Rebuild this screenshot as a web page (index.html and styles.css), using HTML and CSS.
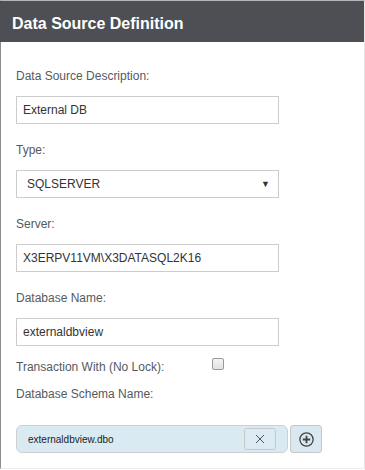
FILE: index.html
```html
<!DOCTYPE html>
<html>
<head>
<meta charset="utf-8">
<link rel="stylesheet" href="styles.css">
</head>
<body>
<div class="panel">
  <div class="header">Data Source Definition</div>
  <div class="content">
    <div class="field">
      <div class="label">Data Source Description:</div>
      <div class="input">External DB</div>
    </div>
    <div class="field">
      <div class="label">Type:</div>
      <div class="select"><span class="select-text">SQLSERVER</span><span class="arrow">&#9660;</span></div>
    </div>
    <div class="field">
      <div class="label">Server:</div>
      <div class="input">X3ERPV11VM\X3DATASQL2K16</div>
    </div>
    <div class="field">
      <div class="label">Database Name:</div>
      <div class="input">externaldbview</div>
    </div>
    <div class="check-row">
      <div class="label check-label">Transaction With (No Lock):</div>
      <span class="checkbox"></span>
    </div>
    <div class="label schema-label">Database Schema Name:</div>
    <div class="tag-row">
      <div class="tag">
        <span class="tag-text">externaldbview.dbo</span>
        <span class="tag-remove">
          <svg width="10" height="10" viewBox="0 0 10 10"><path d="M1 1L9 9M9 1L1 9" stroke="#555" stroke-width="1" fill="none"/></svg>
        </span>
      </div>
      <div class="add-btn">
        <svg width="15" height="15" viewBox="0 0 15 15"><circle cx="7.5" cy="7.5" r="6.6" stroke="#444" stroke-width="1.3" fill="none"/><path d="M7.5 3.8V11.2M3.8 7.5H11.2" stroke="#444" stroke-width="1.8"/></svg>
      </div>
    </div>
  </div>
</div>
</body>
</html>
```
FILE: styles.css
```css
html, body {
  margin: 0;
  padding: 0;
  background: #ffffff;
}
body {
  font-family: "Liberation Sans", Arial, sans-serif;
}
.panel {
  width: 365px;
  height: 469px;
  box-sizing: border-box;
  border-top: 1px solid #b5b5b5;
  border-left: 1px solid #8e8e8e;
  border-right: 1px solid #e6e6e6;
  border-bottom: 1px solid #ececec;
  background: #fff;
}
.header {
  height: 41px;
  background: #4d4f54;
  color: #ffffff;
  font-weight: bold;
  font-size: 16px;
  line-height: 46px;
  padding-left: 12px;
  margin-left: -1px;
  overflow: hidden;
}
.content {
  padding: 26px 0 0 15px;
}
.field {
  margin-bottom: 18px;
}
.label {
  font-size: 12px;
  line-height: 17px;
  color: #555a60;
  margin-bottom: 11px;
}
.input {
  box-sizing: border-box;
  width: 263px;
  height: 28px;
  border: 1px solid #cccccc;
  padding-left: 6px;
  font-size: 12px;
  line-height: 26px;
  color: #333333;
}
.select {
  box-sizing: border-box;
  width: 263px;
  height: 28px;
  border: 1px solid #cccccc;
  padding: 0 8px 0 10px;
  font-size: 12px;
  line-height: 26px;
  color: #333333;
  display: flex;
  justify-content: space-between;
  align-items: center;
}
.arrow {
  font-size: 9px;
  color: #333;
  line-height: 10px;
}
.check-row {
  display: flex;
  align-items: flex-start;
  margin-top: -6px;
}
.check-label {
  width: 196px;
  margin-bottom: 11px;
  padding-top: 1px;
}
.checkbox {
  box-sizing: border-box;
  width: 12px;
  height: 12px;
  border: 1px solid #9a9a9a;
  border-radius: 2px;
  background: linear-gradient(#f4f4f4, #e2e2e2);
}
.schema-label {
  margin-top: -1px;
  margin-bottom: 22px;
}
.tag-row {
  display: flex;
  align-items: flex-start;
  gap: 2px;
}
.tag {
  box-sizing: border-box;
  width: 272px;
  height: 28px;
  border: 1px solid #cfcfcf;
  border-radius: 6px;
  background: #d9eaf3;
  display: flex;
  align-items: center;
  justify-content: space-between;
  padding: 0 11px 0 11px;
}
.tag-text {
  font-size: 10px;
  color: #222;
}
.tag-remove {
  box-sizing: border-box;
  width: 32px;
  height: 22px;
  border: 1px solid #c8c8c8;
  border-radius: 3px;
  background: #dcebf3;
  display: flex;
  align-items: center;
  justify-content: center;
}
.add-btn {
  box-sizing: border-box;
  width: 32px;
  height: 28px;
  border: 1px solid #c8c8c8;
  border-radius: 3px;
  background: #dae9f1;
  display: flex;
  align-items: center;
  justify-content: center;
}
```
